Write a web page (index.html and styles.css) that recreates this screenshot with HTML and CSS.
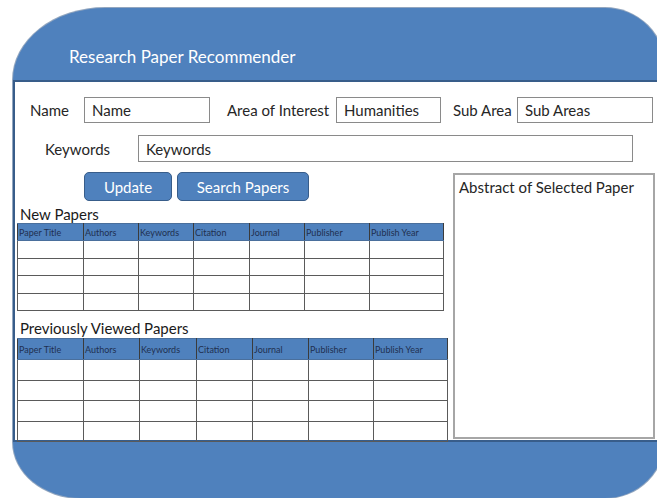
FILE: index.html
```html
<!DOCTYPE html>
<html lang="en">
<head>
<meta charset="utf-8">
<title>Research Paper Recommender</title>
<link rel="stylesheet" href="styles.css">
</head>
<body>
<div class="slide">
  <header class="banner">
    <h1 class="title">Research Paper Recommender</h1>
  </header>

  <main class="panel">
    <div class="row row-top">
      <span class="lbl lbl-name">Name</span>
      <div class="field f-name">Name</div>
      <span class="lbl lbl-area">Area of Interest</span>
      <div class="field f-area">Humanities</div>
      <span class="lbl lbl-sub">Sub Area</span>
      <div class="field f-sub">Sub Areas</div>
    </div>

    <div class="row row-kw">
      <span class="lbl lbl-kw">Keywords</span>
      <div class="field f-kw">Keywords</div>
    </div>

    <div class="content">
      <div class="lists">
        <div class="actions">
          <button class="btn btn-update">Update</button>
          <button class="btn btn-search">Search Papers</button>
        </div>

        <h2 class="section">New Papers</h2>
        <table class="grid grid-new">
          <colgroup>
            <col style="width:66px"><col style="width:55px"><col style="width:55px"><col style="width:56px"><col style="width:55px"><col style="width:65px"><col style="width:74px">
          </colgroup>
          <thead>
            <tr><th>Paper Title</th><th>Authors</th><th>Keywords</th><th>Citation</th><th>Journal</th><th>Publisher</th><th>Publish Year</th></tr>
          </thead>
          <tbody>
            <tr><td></td><td></td><td></td><td></td><td></td><td></td><td></td></tr>
            <tr><td></td><td></td><td></td><td></td><td></td><td></td><td></td></tr>
            <tr><td></td><td></td><td></td><td></td><td></td><td></td><td></td></tr>
            <tr><td></td><td></td><td></td><td></td><td></td><td></td><td></td></tr>
          </tbody>
        </table>

        <h2 class="section section-prev">Previously Viewed Papers</h2>
        <table class="grid grid-prev">
          <colgroup>
            <col style="width:66px"><col style="width:56px"><col style="width:57px"><col style="width:56px"><col style="width:56px"><col style="width:65px"><col style="width:74px">
          </colgroup>
          <thead>
            <tr><th>Paper Title</th><th>Authors</th><th>Keywords</th><th>Citation</th><th>Journal</th><th>Publisher</th><th>Publish Year</th></tr>
          </thead>
          <tbody>
            <tr><td></td><td></td><td></td><td></td><td></td><td></td><td></td></tr>
            <tr><td></td><td></td><td></td><td></td><td></td><td></td><td></td></tr>
            <tr><td></td><td></td><td></td><td></td><td></td><td></td><td></td></tr>
            <tr><td></td><td></td><td></td><td></td><td></td><td></td><td></td></tr>
          </tbody>
        </table>
      </div>

      <aside class="abstract">Abstract of Selected Paper</aside>
    </div>
  </main>

  <footer class="foot"></footer>
</div>
</body>
</html>
```

FILE: styles.css
```css
html, body {
  margin: 0;
  padding: 0;
  background: #ffffff;
  overflow: hidden;
}

body {
  font-family: "Lato", "Open Sans", sans-serif;
  color: #262626;
}

/* Outer rounded shape: blue banner on top, white panel, blue band below */
.slide {
  margin: 8px 0 0 13px;
  width: 652px;
  height: 490px;
  background: #4f81bd;
  border-radius: 92px 60px 60px 68px / 72px 60px 60px 56px;
  box-shadow: 0 0 0 1px rgba(56, 93, 138, 0.55);
  overflow: hidden;
  display: flex;
  flex-direction: column;
}

.banner {
  height: 72px;
  flex: 0 0 auto;
  display: flex;
  align-items: flex-end;
  padding: 0 0 13px 56px;
  box-sizing: border-box;
}

.title {
  margin: 0;
  font-size: 17px;
  font-weight: normal;
  line-height: 20px;
  color: #ffffff;
}

.panel {
  height: 362px;
  flex: 0 0 auto;
  box-sizing: border-box;
  background: #ffffff;
  border-top: 2px solid #385d8a;
  border-left: 2px solid #385d8a;
  border-bottom: 2px solid #385d8a;
  padding-top: 15px;
}

.row {
  display: flex;
  align-items: center;
}

.lbl {
  font-size: 15px;
  line-height: 18px;
  white-space: nowrap;
  box-sizing: border-box;
}

.field {
  box-sizing: border-box;
  border: 1px solid #8a8a8a;
  background: #ffffff;
  font-size: 15px;
  line-height: 18px;
  padding: 0 0 0 7px;
  display: flex;
  align-items: center;
  white-space: nowrap;
}

.row-top { height: 26px; }
.row-top .field { height: 26px; }

.lbl-name { width: 69px; padding-left: 15px; }
.f-name { width: 126px; }
.lbl-area { width: 126px; padding-left: 17px; }
.f-area { width: 105px; }
.lbl-sub { width: 76px; padding-left: 12px; }
.f-sub { width: 136px; }

.row-kw { height: 27px; margin-top: 12px; }
.row-kw .field { height: 27px; }
.lbl-kw { width: 123px; padding-left: 30px; }
.f-kw { width: 495px; }

.content {
  display: flex;
  align-items: flex-start;
  margin-top: 10px;
  padding-left: 2px;
}

.lists {
  width: 430px;
  flex: 0 0 auto;
}

.actions {
  display: flex;
  gap: 5px;
  margin-left: 67px;
}

.btn {
  height: 29px;
  box-sizing: border-box;
  background: #4f81bd;
  border: 1px solid #385d8a;
  border-radius: 5px;
  color: #ffffff;
  font-family: inherit;
  font-size: 15px;
  padding: 0;
}

.btn-update { width: 88px; }
.btn-search { width: 132px; }

.section {
  margin: 4px 0 0 3px;
  font-size: 15px;
  font-weight: normal;
  line-height: 18px;
  color: #1a1a1a;
}

.section-prev { margin-top: 8px; }

.grid {
  border-collapse: collapse;
  table-layout: fixed;
  margin-top: 0;
}

.grid-new { width: 426px; }
.grid-prev { width: 430px; margin-top: 1px; }

.grid th {
  background: #4f81bd;
  border: 1px solid #4a6f9c;
  border-left-color: #3b3b3b;
  border-right-color: #3b3b3b;
  font-size: 9px;
  font-weight: normal;
  color: #1f3050;
  text-align: left;
  padding: 0 0 0 1px;
  white-space: nowrap;
  overflow: hidden;
}

.grid td {
  border: 1px solid #5a5a5a;
  padding: 0;
}

.grid-new th { height: 16px; }
.grid-new td { height: 16.5px; }
.grid-prev th { height: 20px; }
.grid-prev td { height: 19.5px; }

.abstract {
  width: 202px;
  height: 266px;
  box-sizing: border-box;
  margin: 1px 0 0 6px;
  border: 2px solid #a6a6a6;
  padding: 3px 0 0 4px;
  font-size: 15px;
  line-height: 18px;
  color: #262626;
  white-space: nowrap;
}

.foot {
  flex: 1 1 auto;
}
```
